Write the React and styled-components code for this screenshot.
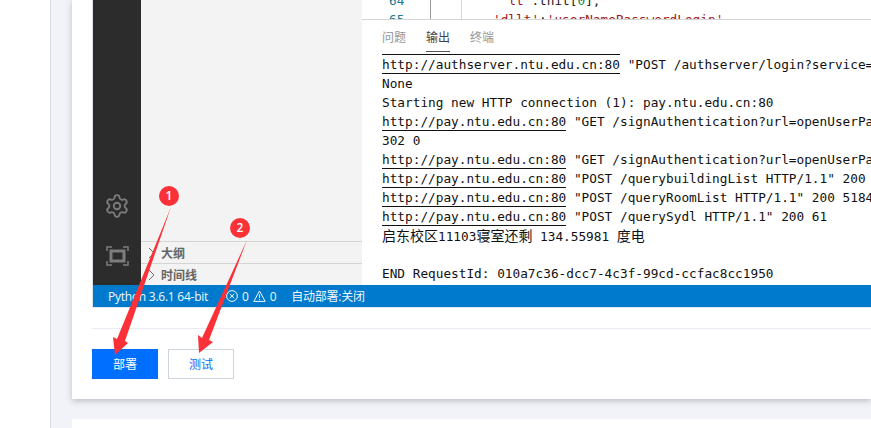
import React from "react";
import styled, { createGlobalStyle } from "styled-components";
import { Settings } from "lucide-react";

const GlobalStyle = createGlobalStyle`
  html, body {
    margin: 0;
    padding: 0;
    background: #fff;
    overflow: hidden;
  }
`;

const Page = styled.div`
  position: relative;
  width: 871px;
  height: 428px;
  overflow: hidden;
  padding-left: 50px;
  box-sizing: border-box;
  font-family: "Noto Sans CJK SC", sans-serif;
`;

const Content = styled.div`
  height: 100%;
  background: #f2f3f8;
  border-left: 1px solid #d3d8e4;
  padding-left: 21px;
`;

const Card = styled.div`
  background: #fff;
  height: 399px;
  padding-left: 20px;
  box-shadow: 0 2px 6px rgba(60, 65, 90, 0.3);
`;

const NextCard = styled.div`
  background: #fff;
  height: 20px;
  margin-top: 20px;
`;

const Shell = styled.div`
  height: 307px;
  display: grid;
  grid-template-columns: 48px 221px 1fr;
  grid-template-rows: 285px 22px;
  border-left: 1px solid #dfe2e8;
  border-bottom: 1px solid #e4e6ec;
`;

const ActivityBar = styled.div`
  background: #2c2c2c;
  color: #7d7d7d;
  display: flex;
  flex-direction: column;
  align-items: center;
  justify-content: flex-end;
  gap: 27px;
  padding-bottom: 19px;
`;

const Side = styled.div`
  background: #f3f3f3;
  display: flex;
  flex-direction: column;
  justify-content: flex-end;
`;

const SideRow = styled.div`
  height: 21px;
  border-top: 1px solid #d4d4d4;
  display: flex;
  align-items: center;
  gap: 6px;
  padding-left: 7px;
  font-size: 12px;
  font-weight: 700;
  color: #666;
`;

const Main = styled.div`
  display: flex;
  flex-direction: column;
  min-width: 0;
  overflow: hidden;
`;

const Editor = styled.div`
  height: 19px;
  flex: none;
  overflow: hidden;
  display: grid;
  grid-template-columns: 69px 31px 1fr;
  font-family: "DejaVu Sans Mono", monospace;
  font-size: 12.75px;
  line-height: 19px;
`;

const Gutter = styled.div`
  margin-top: -9px;
  padding-left: 27px;
  color: #237893;
  border-right: 1px solid #9a9a9a;
`;

const Fold = styled.div`
  border-right: 1px solid #d6d6d6;
`;

const Code = styled.pre`
  margin: -9px 0 0;
  padding-left: 31px;
  font: inherit;
  color: #222;
`;

const CodeString = styled.span`
  color: #a31515;
`;

const CodeNumber = styled.span`
  color: #098658;
`;

const Panel = styled.div`
  flex: 1;
  min-height: 0;
  display: flex;
  flex-direction: column;
  border-top: 1px solid #d4d4d4;
  overflow: hidden;
`;

const Tabs = styled.div`
  height: 34px;
  flex: none;
  display: flex;
  gap: 20px;
  padding-left: 20px;
  background: #fff;
`;

const Tab = styled.div`
  height: 31px;
  line-height: 34px;
  font-size: 12px;
  color: ${(p) => (p.$active ? "#424242" : "#969696")};
  border-bottom: ${(p) => (p.$active ? "1px solid #555" : "none")};
`;

const Output = styled.div`
  padding-left: 20px;
  font-family: "DejaVu Sans Mono", "Noto Sans CJK SC", monospace;
  font-size: 12.75px;
  line-height: 19px;
  color: #111;
  white-space: pre;
`;

/* underline of the row scrolled away behind the tabs */
const ScrolledUnderline = styled.div`
  width: 238px;
  height: 1px;
  background: #111;
`;

const OutputLine = styled.div`
  height: 19px;
`;

const Link = styled.span`
  border-bottom: 1px solid #111;
  padding-bottom: 1px;
`;

const Chinese = styled.span`
  font-family: "Noto Sans CJK SC", sans-serif;
  font-size: 14px;
`;

const StatusBar = styled.div`
  grid-column: 1 / -1;
  background: #007acc;
  color: #f2f8fc;
  display: flex;
  align-items: center;
  padding-left: 15px;
  font-family: "Open Sans", "Noto Sans CJK SC", sans-serif;
  font-size: 12px;
  letter-spacing: -0.25px;
`;

const StatusGroup = styled.div`
  display: flex;
  align-items: center;
  gap: 4px;
  margin-left: ${(p) => p.$offset || 0}px;
`;

const Divider = styled.div`
  height: 1px;
  margin-top: 20px;
  background: #e9ebf2;
`;

const Actions = styled.div`
  display: flex;
  gap: 10px;
  margin-top: 20px;
`;

const Button = styled.button`
  width: 66px;
  height: 30px;
  padding: 0 0 2px;
  box-sizing: border-box;
  font-family: "Noto Sans CJK SC", sans-serif;
  font-size: 12px;
  background: ${(p) => (p.$primary ? "#006eff" : "#fff")};
  color: ${(p) => (p.$primary ? "#fff" : "#006eff")};
  border: ${(p) => (p.$primary ? "none" : "1px solid #cfd5de")};
`;

const ArrowLayer = styled.svg`
  position: absolute;
  left: 0;
  top: 0;
  pointer-events: none;
`;

const Badge = styled.div`
  position: absolute;
  left: ${(p) => p.$x - 10}px;
  top: ${(p) => p.$y - 10}px;
  width: 20px;
  height: 20px;
  border-radius: 50%;
  background: #fb3138;
  color: #fff;
  font-family: "Open Sans", sans-serif;
  font-size: 12px;
  font-weight: 600;
  line-height: 20px;
  text-align: center;
`;

const FocusIcon = () => (
  <svg width="23" height="20" viewBox="0 0 23 20" fill="none" stroke="currentColor">
    <path d="M6 1H1v4M17 1h5v4M6 19H1v-4M17 19h5v-4" strokeWidth="1.5" />
    <rect x="5" y="5" width="13" height="10" strokeWidth="3" />
  </svg>
);

const Chevron = () => (
  <svg width="7" height="12" viewBox="0 0 7 12" fill="none" stroke="#6f6f6f" strokeWidth="1">
    <path d="M1 1l5 5-5 5" />
  </svg>
);

const ErrorIcon = () => (
  <svg width="12" height="12" viewBox="0 0 12 12" fill="none" stroke="currentColor">
    <circle cx="6" cy="6" r="5.4" />
    <path d="M3.8 3.8l4.4 4.4M8.2 3.8l-4.4 4.4" />
  </svg>
);

const WarningIcon = () => (
  <svg width="13" height="12" viewBox="0 0 13 12" fill="none" stroke="currentColor">
    <path d="M6.5 1l5.7 10.4H.8z" />
    <path d="M6.5 4.5v3.5M6.5 9v1" />
  </svg>
);

const outputLines = [
  { link: "http://authserver.ntu.edu.cn:80", rest: ' "POST /authserver/login?service=' },
  { rest: "None" },
  { rest: "Starting new HTTP connection (1): pay.ntu.edu.cn:80" },
  { link: "http://pay.ntu.edu.cn:80", rest: ' "GET /signAuthentication?url=openUserPa' },
  { rest: "302 0" },
  { link: "http://pay.ntu.edu.cn:80", rest: ' "GET /signAuthentication?url=openUserPa' },
  { link: "http://pay.ntu.edu.cn:80", rest: ' "POST /querybuildingList HTTP/1.1" 200' },
  { link: "http://pay.ntu.edu.cn:80", rest: ' "POST /queryRoomList HTTP/1.1" 200 5184' },
  { link: "http://pay.ntu.edu.cn:80", rest: ' "POST /querySydl HTTP/1.1" 200 61' },
];

export default function App() {
  return (
    <Page>
      <GlobalStyle />
      <Content>
        <Card>
          <Shell>
            <ActivityBar>
              <Settings size={26} strokeWidth={1.7} />
              <FocusIcon />
            </ActivityBar>
            <Side>
              <SideRow>
                <Chevron />
                大纲
              </SideRow>
              <SideRow>
                <Chevron />
                时间线
              </SideRow>
            </Side>
            <Main>
              <Editor>
                <Gutter>
                  64
                  <br />
                  65
                </Gutter>
                <Fold />
                <Code>
                  {" "}
                  <CodeString>'lt'</CodeString>.thit[<CodeNumber>0</CodeNumber>],{"\n"}
                  <CodeString>'dllt'</CodeString>:<CodeString>'userNamePasswordLogin'</CodeString>
                </Code>
              </Editor>
              <Panel>
                <Tabs>
                  <Tab>问题</Tab>
                  <Tab $active>输出</Tab>
                  <Tab>终端</Tab>
                </Tabs>
                <Output>
                  <ScrolledUnderline />
                  {outputLines.map((line, i) => (
                    <OutputLine key={i}>
                      {line.link && <Link>{line.link}</Link>}
                      {line.rest}
                    </OutputLine>
                  ))}
                  <OutputLine>
                    <Chinese>启东校区</Chinese>11103<Chinese>寝室还剩</Chinese> 134.55981 <Chinese>度电</Chinese>
                  </OutputLine>
                  <OutputLine />
                  <OutputLine>END RequestId: 010a7c36-dcc7-4c3f-99cd-ccfac8cc1950</OutputLine>
                </Output>
              </Panel>
            </Main>
            <StatusBar>
              <StatusGroup>Python 3.6.1 64-bit</StatusGroup>
              <StatusGroup $offset={18}>
                <ErrorIcon />0<WarningIcon />0
              </StatusGroup>
              <StatusGroup $offset={15}>自动部署:关闭</StatusGroup>
            </StatusBar>
          </Shell>
          <Divider />
          <Actions>
            <Button $primary>部署</Button>
            <Button>测试</Button>
          </Actions>
        </Card>
        <NextCard />
      </Content>
      <ArrowLayer width="871" height="428" viewBox="0 0 871 428">
        <polygon points="171,207 125,341 128,343 115,355 113,337 117,339" fill="#fb3138" />
        <polygon points="247,240 209,340 213,342 199,353 198,335 202,338" fill="#fb3138" />
      </ArrowLayer>
      <Badge $x={169} $y={196}>1</Badge>
      <Badge $x={240} $y={228}>2</Badge>
    </Page>
  );
}
